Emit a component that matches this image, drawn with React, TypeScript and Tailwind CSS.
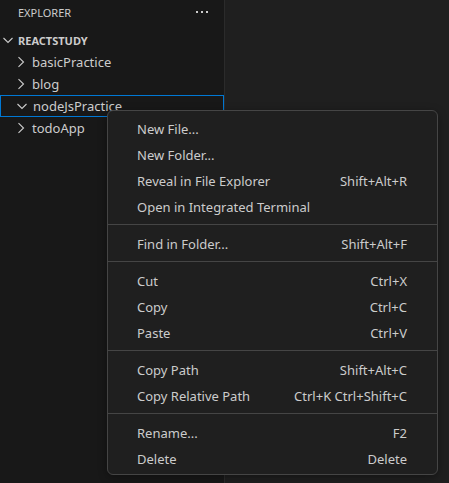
import React from 'react';

type Item = { label: string; keys?: string } | 'sep';

const menu: Item[] = [
  { label: 'New File...' },
  { label: 'New Folder...' },
  { label: 'Reveal in File Explorer', keys: 'Shift+Alt+R' },
  { label: 'Open in Integrated Terminal' },
  'sep',
  { label: 'Find in Folder...', keys: 'Shift+Alt+F' },
  'sep',
  { label: 'Cut', keys: 'Ctrl+X' },
  { label: 'Copy', keys: 'Ctrl+C' },
  { label: 'Paste', keys: 'Ctrl+V' },
  'sep',
  { label: 'Copy Path', keys: 'Shift+Alt+C' },
  { label: 'Copy Relative Path', keys: 'Ctrl+K Ctrl+Shift+C' },
  'sep',
  { label: 'Rename...', keys: 'F2' },
  { label: 'Delete', keys: 'Delete' },
];

const Chevron = ({ open }: { open?: boolean }) => (
  <svg width="16" height="16" viewBox="0 0 16 16" className="shrink-0">
    {open ? (
      <path d="M3.5 6 L8 10.5 L12.5 6" fill="none" stroke="#cccccc" strokeWidth="1.1" />
    ) : (
      <path d="M5.5 3.2 L10.5 8 L5.5 12.8" fill="none" stroke="#cccccc" strokeWidth="1.1" />
    )}
  </svg>
);

const Folder = ({ name, open, focused }: { name: string; open?: boolean; focused?: boolean }) => (
  <div
    className={`flex h-[22px] items-center pl-[13px] ${
      focused ? 'border border-[#0078d4] pl-[12px]' : ''
    }`}
  >
    <Chevron open={open} />
    <span className="ml-[3px] pt-[2px] text-[13px] text-[#cccccc]">{name}</span>
  </div>
);

export default function App() {
  return (
    <div
      className="relative flex h-[483px] w-[449px] overflow-hidden bg-[#1f1f1f]"
      style={{ fontFamily: '"Noto Sans", "Open Sans", sans-serif' }}
    >
      <aside className="flex w-[225px] shrink-0 flex-col border-r border-[#2b2b2b] bg-[#181818]">
        <div className="flex h-[29px] items-start justify-between pl-[18px] pr-[16px] pt-[5px]">
          <span className="text-[11px] leading-[16px] text-[#cccccc]">EXPLORER</span>
          <div className="mt-[6px] flex gap-[3px]">
            <span className="h-[2px] w-[2px] bg-[#cccccc]" />
            <span className="h-[2px] w-[2px] bg-[#cccccc]" />
            <span className="h-[2px] w-[2px] bg-[#cccccc]" />
          </div>
        </div>
        <div className="flex h-[22px] items-center">
          <Chevron open />
          <span className="ml-[2px] pt-[2px] text-[11px] font-bold text-[#cccccc]">REACTSTUDY</span>
        </div>
        <Folder name="basicPractice" />
        <Folder name="blog" />
        <Folder name="nodeJsPractice" open focused />
        <Folder name="todoApp" />
      </aside>

      <div className="absolute left-[107px] top-[110px] w-[331px] rounded-[6px] border border-[#454545] bg-[#1f1f1f] pb-[2px] pt-[5px] shadow-[0_2px_8px_rgba(0,0,0,0.36)]">
        {menu.map((it, i) =>
          it === 'sep' ? (
            <div key={i} className="mb-[6px] mt-[4px] h-px bg-[#454545]" />
          ) : (
            <div
              key={i}
              className="flex h-[26px] items-center justify-between pl-[29px] pr-[30px] pt-[2px] text-[13px] text-[#cccccc]"
            >
              <span>{it.label}</span>
              {it.keys && <span>{it.keys}</span>}
            </div>
          )
        )}
      </div>
    </div>
  );
}
